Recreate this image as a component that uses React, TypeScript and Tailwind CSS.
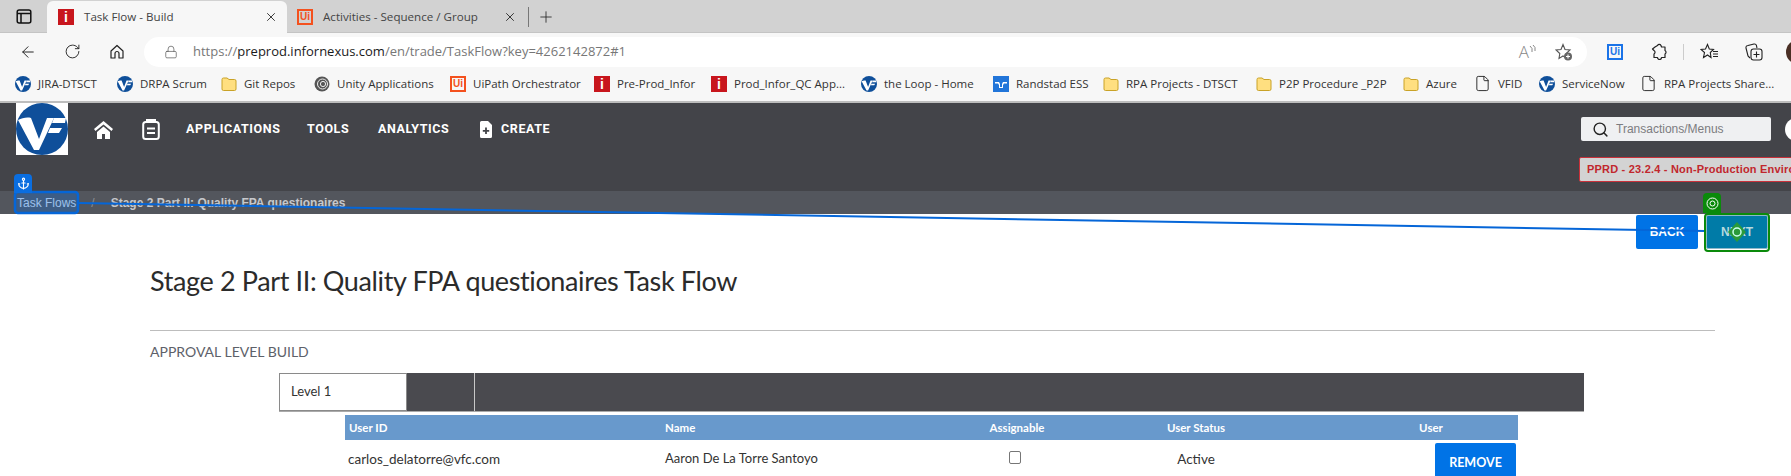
import { Anchor, ArrowLeft, File as FileIcon, Lock, Plus, RotateCw, Search, X } from "lucide-react";

const VF = ({ size = 16, square = false }: { size?: number; square?: boolean }) => (
  <svg width={size} height={size} viewBox="0 0 52 52" className="shrink-0 block">
    {square && <rect width="52" height="52" fill="#fff" />}
    <circle cx="26" cy="26" r="26" fill="#0f4f9a" />
    <path d="M2 17 C6 15 11 14 15 15 L23 36 L31 15 L38 15 L23 47 L18 47 Z" fill="#fff" />
    <path d="M38 15 L50 15 L49 20 L36 20 Z M34 25 L46 25 L43 30 L32 30 Z" fill="#fff" />
  </svg>
);

const Infor = () => (
  <span className="w-4 h-4 shrink-0 bg-[#c8161d] flex items-center justify-center text-white text-[14px] font-bold leading-none font-['Liberation_Sans',sans-serif]">
    i
  </span>
);

const UiP = () => (
  <span className="w-4 h-4 shrink-0 border-2 border-[#f4511e] flex items-center justify-center text-[#f4511e] text-[10px] font-bold leading-none font-['Liberation_Sans',sans-serif]">
    Ui
  </span>
);

const Folder = () => (
  <svg width="16" height="16" viewBox="0 0 16 16" className="shrink-0">
    <path d="M1 3.5 A1.5 1.5 0 0 1 2.5 2 H6 L8 3.5 H13.5 A1.5 1.5 0 0 1 15 5 V13 A1.5 1.5 0 0 1 13.5 14.5 H2.5 A1.5 1.5 0 0 1 1 13 Z" fill="#ffdf80" stroke="#c9a227" strokeWidth="1" />
  </svg>
);

const Unity = () => (
  <svg width="16" height="16" viewBox="0 0 16 16" className="shrink-0" fill="none">
    <circle cx="8" cy="8" r="7.5" fill="#555" />
    <circle cx="8.5" cy="8" r="5" stroke="#eee" strokeWidth="1" />
    <circle cx="9" cy="8" r="2.6" stroke="#eee" strokeWidth="1" />
  </svg>
);

const Randstad = () => (
  <svg width="16" height="16" viewBox="0 0 16 16" className="shrink-0">
    <rect width="16" height="16" fill="#2175d9" />
    <path d="M2 6 H6 L7 8 V11 H9 V8 L10 6 H14 V7.5 H11 L10 9 V12 H6 V9 L5 7.5 H2 Z" fill="#fff" />
  </svg>
);

const Doc = () => <FileIcon size={17} strokeWidth={1.3} className="shrink-0 text-[#222]" />;

const bookmarks = [
  { icon: <VF />, text: "JIRA-DTSCT", w: "w-[62px]" },
  { icon: <VF />, text: "DRPA Scrum", w: "w-[64px]" },
  { icon: <Folder />, text: "Git Repos", w: "w-[53px]" },
  { icon: <Unity />, text: "Unity Applications", w: "w-[96px]" },
  { icon: <UiP />, text: "UiPath Orchestrator", w: "w-[104px]" },
  { icon: <Infor />, text: "Pre-Prod_Infor", w: "w-[77px]" },
  { icon: <Infor />, text: "Prod_Infor_QC App...", w: "w-[110px]" },
  { icon: <VF />, text: "the Loop - Home", w: "w-[92px]" },
  { icon: <Randstad />, text: "Randstad ESS", w: "w-[70px]" },
  { icon: <Folder />, text: "RPA Projects - DTSCT", w: "w-[113px]" },
  { icon: <Folder />, text: "P2P Procedure _P2P", w: "w-[107px]" },
  { icon: <Folder />, text: "Azure", w: "w-[31px]" },
  { icon: <Doc />, text: "VFID", w: "w-[24px]" },
  { icon: <VF />, text: "ServiceNow", w: "w-[61px]" },
  { icon: <Doc />, text: "RPA Projects Share...", w: "w-[109px]" },
];

export default function App() {
  return (
    <div className="relative w-[1791px] h-[476px] overflow-hidden bg-white flex flex-col font-['Open_Sans',sans-serif]">
      {/* tab strip */}
      <div className="h-[33px] shrink-0 bg-[#d2d2d2] border-b border-[#c4c4c4] flex items-stretch pt-px">
        <div className="w-[47px] flex items-center justify-center">
          <svg width="16" height="15" viewBox="0 0 16 15" fill="none" stroke="#111" strokeWidth="1.5">
            <rect x="1.2" y="1" width="13.6" height="13" rx="2" />
            <path d="M1.2 4.5 H14.8 M5 4.5 V14" />
          </svg>
        </div>
        <div className="w-[240px] h-[32px] bg-[#f7f7f7] rounded-t-md flex items-center pl-[11px] pr-[9px] text-[11.6px] text-[#444]">
          <Infor />
          <span className="ml-[10px] flex-1">Task Flow - Build</span>
          <X size={14} strokeWidth={1.5} className="text-[#222]" />
        </div>
        <div className="w-[233px] flex items-center pl-[10px] pr-[3px] text-[11.6px] text-[#444]">
          <UiP />
          <span className="ml-[10px] flex-1">Activities - Sequence / Group</span>
          <X size={14} strokeWidth={1.5} className="text-[#222]" />
        </div>
        <div className="w-px h-[20px] mt-[6px] ml-[8px] bg-[#777]" />
        <div className="flex items-center ml-[8px]">
          <Plus size={18} strokeWidth={1.1} className="text-[#222]" />
        </div>
      </div>

      {/* toolbar */}
      <div className="h-[37px] shrink-0 bg-[#f7f7f7] flex items-center relative">
        <div className="w-[144px] shrink-0 flex items-center pl-[19px] text-[#222]">
          <ArrowLeft size={18} strokeWidth={1.3} />
          <RotateCw size={17} strokeWidth={1.3} className="ml-[27px]" />
          <svg width="16" height="16" viewBox="0 0 16 16" fill="none" stroke="#222" strokeWidth="1.2" className="ml-[28px]">
            <path d="M2 7 L8 1.5 L14 7 V14 H10 V9.5 A2 2 0 0 0 6 9.5 V14 H2 Z" strokeLinejoin="round" />
          </svg>
        </div>
        <div className="w-[1443px] shrink-0 h-[30px] bg-white rounded-full flex items-center pl-[20px] pr-[14px] text-[13px]">
          <Lock size={14} strokeWidth={1.2} className="text-[#555]" />
          <span className="ml-[15px] text-[#777] whitespace-nowrap">
            https://<span className="text-[#1a1a1a]">preprod.infornexus.com</span>/en/trade/TaskFlow?key=4262142872#1
          </span>
          <div className="flex-1" />
          <span className="text-[17px] font-light text-[#888] leading-none">A</span>
          <svg width="8" height="12" viewBox="0 0 8 12" fill="none" stroke="#888" className="-mt-1"><path d="M1 2 Q4 4 3 8 M4 1 Q7 3 6 7" /></svg>
          <svg width="18" height="18" viewBox="0 0 18 18" className="ml-[18px]" fill="none" stroke="#555" strokeWidth="1.1">
            <path d="M8 1.5 L10 6.5 L15 7 L11.2 10.5 L12 15.5 L8 13 L4 15.5 L4.8 10.5 L1 7 L6 6.5 Z" />
            <circle cx="13" cy="13.5" r="4" fill="#666" stroke="none" />
            <path d="M13 11.5 V15.5 M11 13.5 H15" stroke="#fff" />
          </svg>
        </div>
        <span className="ml-[20px] w-4 h-4 shrink-0 border-2 border-[#1a73e8] flex items-center justify-center text-[#1a73e8] text-[10px] font-bold leading-none font-['Liberation_Sans',sans-serif]">
          Ui
        </span>
        <svg width="17" height="17" viewBox="0 0 17 17" fill="none" stroke="#222" strokeWidth="1.2" className="ml-[28px] shrink-0">
          <path d="M6.5 2.5 A2 2 0 0 1 10 2.5 L10.5 4 H14 V7.5 A2 2 0 0 1 14 11 V14.5 H10.5 A2 2 0 0 1 6.5 14.5 H3 V11 A2 2 0 0 0 3 7.5 L1.5 6 L4 4 Z" strokeLinejoin="round" />
        </svg>
        <div className="ml-[15px] w-px h-[16px] shrink-0 bg-[#ccc]" />
        <svg width="19" height="17" viewBox="0 0 19 17" fill="none" stroke="#222" strokeWidth="1.1" className="ml-[16px] shrink-0">
          <path d="M7.5 1.5 L9.3 6 L13.5 6.5 L10.3 9.5 L11 14.5 L7.5 12 L3.5 14.5 L4.5 9.5 L1 6.5 L5.5 6 Z" />
          <path d="M13 8.5 H18 M13 11 H18 M13 13.5 H18" />
        </svg>
        <svg width="18" height="18" viewBox="0 0 18 18" fill="none" stroke="#222" strokeWidth="1.1" className="ml-[26px] shrink-0">
          <path d="M5 15 L3 13 L1 5 A2 2 0 0 1 3 2.5 L9 1 A2 2 0 0 1 11.5 3 L12 5" />
          <rect x="6" y="6" width="11" height="11" rx="2.5" />
          <path d="M11.5 8.5 V14.5 M8.5 11.5 H14.5" />
        </svg>
        <div className="ml-[23px] w-[24px] h-[24px] shrink-0 rounded-full bg-[#4a2f25]" />
      </div>

      {/* bookmarks */}
      <div className="h-[33px] shrink-0 bg-[#f7f7f7] border-b-2 border-[#bdbdbd] flex items-center pb-[4px] pl-[15px] gap-[17px] text-[11.5px] text-[#333]">
        {bookmarks.map((b) => (
          <div key={b.text} className="flex items-center gap-[7px] shrink-0">
            {b.icon}
            <span className={`${b.w} whitespace-nowrap`}>{b.text}</span>
          </div>
        ))}
      </div>

      {/* app header */}
      <div className="h-[88px] shrink-0 bg-[#434449] flex justify-between items-start pl-[16px] overflow-hidden">
        <div className="flex items-center h-[52px]">
          <VF size={52} square />
          <svg width="19" height="18" viewBox="0 0 19 18" fill="#fff" className="ml-[26px] mt-[1px]">
            <path d="M9.5 0 L19 8 L17.5 10 L9.5 3.5 L1.5 10 L0 8 Z" />
            <path d="M9.5 5.5 L16 11 V18 H11 V13 H8 V18 H3 V11 Z" />
          </svg>
          <svg width="18" height="21" viewBox="0 0 18 21" fill="none" stroke="#fff" strokeWidth="2" className="ml-[29px] mt-[1px]">
            <rect x="1.2" y="3" width="15.6" height="17" rx="2.5" />
            <path d="M5 1 H13 V3 H5 Z" fill="#fff" />
            <path d="M5 9.5 H13 M5 14 H13" />
          </svg>
          <nav className="flex items-center text-white text-[12.5px] font-bold tracking-[0.6px] font-['Roboto',sans-serif]">
            <span className="ml-[26px] w-[94px] whitespace-nowrap">APPLICATIONS</span>
            <span className="ml-[27px] w-[44px]">TOOLS</span>
            <span className="ml-[27px] w-[72px]">ANALYTICS</span>
            <svg width="12" height="17" viewBox="0 0 12 17" className="ml-[30px]">
              <path d="M1.5 0 H8 L12 4 V15.5 A1.5 1.5 0 0 1 10.5 17 H1.5 A1.5 1.5 0 0 1 0 15.5 V1.5 A1.5 1.5 0 0 1 1.5 0 Z" fill="#fff" />
              <path d="M6 6.5 V13 M2.8 9.8 H9.2" stroke="#434449" strokeWidth="1.8" />
            </svg>
            <span className="ml-[9px]">CREATE</span>
          </nav>
        </div>
        <div className="w-[212px] shrink-0 pt-[14px]">
          <div className="flex items-center">
            <div className="ml-[2px] w-[190px] h-[24px] shrink-0 bg-[#eff0f2] rounded-[2px] flex items-center pl-[11px] text-[12px] text-[#7c7c80] font-['Liberation_Sans',sans-serif]">
              <Search size={17} strokeWidth={2} className="text-[#222] mr-[7px]" />
              Transactions/Menus
            </div>
            <div className="ml-[14px] w-[23px] h-[23px] shrink-0 rounded-full bg-white" />
          </div>
          <div className="mt-[16px] w-[300px] h-[25px] bg-[#d3d3d3] border border-[#c8313a] rounded-[2px] flex items-center pl-[7px] text-[11px] font-bold text-[#c1272d] tracking-[0.2px] whitespace-nowrap font-['Liberation_Sans',sans-serif]">
            PPRD - 23.2.4 - Non-Production Environment
          </div>
        </div>
      </div>

      {/* breadcrumb */}
      <div className="h-[23px] shrink-0 bg-[#53565d] flex items-center pl-[17px] text-[12px] font-['Liberation_Sans',sans-serif]">
        <span className="text-[#dbe4f2]">Task Flows</span>
        <span className="ml-[15px] text-[#8d9096]">/</span>
        <span className="ml-[16px] font-bold text-[#c6c8cc]">Stage 2 Part II: Quality FPA questionaires</span>
      </div>

      {/* actions */}
      <div className="flex justify-end gap-[8px] pr-[23px] pt-px h-[38px] shrink-0">
        <button className="w-[62px] h-[34px] bg-[#0073e6] rounded-[2px] text-white text-[12px] font-bold font-['Liberation_Sans',sans-serif]">BACK</button>
        <button className="w-[62px] h-[34px] bg-[#007ba7] border border-[#8fb8c8] rounded-[2px] text-[#b7dadd] text-[12px] font-bold font-['Liberation_Sans',sans-serif]">NEXT</button>
      </div>

      {/* body */}
      <div className="pl-[150px] pr-[76px] font-['Lato',sans-serif]">
        <h1 className="mt-[9px] h-[40px] leading-[40px] text-[27px] tracking-[-0.37px] text-[#2b2b2b] whitespace-nowrap">
          Stage 2 Part II: Quality FPA questionaires Task Flow
        </h1>
        <div className="mt-[29px] h-px bg-[#bdbdbd]" />
        <div className="mt-[11px] h-[20px] leading-[20px] text-[14px] text-[#5d6169]">APPROVAL LEVEL BUILD</div>
      </div>

      <div className="mt-[11px] ml-[279px] w-[1305px] shrink-0">
        <div className="h-[39px] bg-[#4a4a4f] border-b border-[#aaa] flex">
          <div className="w-[128px] bg-white border border-[#8a8a8a] flex items-center pl-[11px] text-[13px] text-[#333] font-['Lato',sans-serif]">Level 1</div>
          <div className="w-[68px] border-r border-[#c8c8c8]" />
        </div>
      </div>

      <div className="mt-[3px] ml-[345px] w-[1173px] shrink-0 font-['Lato',sans-serif]">
        <div className="h-[25px] bg-[#6899cc] grid grid-cols-[320px_270px_164px_194px_1fr] items-center text-white text-[11.5px] font-bold">
          <span className="pl-[4px]">User ID</span>
          <span>Name</span>
          <span className="text-center">Assignable</span>
          <span className="text-center">User Status</span>
          <span className="text-center pl-[51px]">User</span>
        </div>
        <div className="h-[40px] mt-[3px] grid grid-cols-[320px_270px_164px_194px_1fr] items-start text-[13.5px] text-[#333]">
          <span className="pl-[3px] mt-[6px]">carlos_delatorre@vfc.com</span>
          <span className="mt-[6px] text-[13px]">Aaron De La Torre Santoyo</span>
          <div className="mt-[8px] pr-[4px] flex justify-center">
            <div className="w-[12px] h-[13px] rounded-[2px] border border-[#767676] bg-white" />
          </div>
          <span className="text-center mt-[6px]">Active</span>
          <button className="ml-[142px] w-[81px] h-[40px] bg-[#0073e6] rounded-[2px] text-white text-[12.5px] font-bold">REMOVE</button>
        </div>
      </div>

      {/* Automation overlay */}
      <svg className="absolute inset-0 pointer-events-none" width="1791" height="476">
        <rect x="15" y="192" width="63" height="21" rx="3" fill="#0a6ee0" fillOpacity="0.3" stroke="#0566d8" strokeWidth="2.5" />
        <path d="M78 203 L1705 231" stroke="#0566d8" strokeWidth="2" fill="none" />
        <rect x="1705" y="214" width="64" height="37" rx="3" fill="none" stroke="#0a8a0a" strokeWidth="2" />
        <path d="M1737 222 L1746 232 L1737 242 L1728 232 Z" fill="#2a9a3a" />
        <circle cx="1737" cy="232" r="4" fill="none" stroke="#cfe" strokeWidth="1.5" />
      </svg>
      <div className="absolute left-[14px] top-[174px] w-[18px] h-[19px] bg-[#0a6ee0] rounded-t-[4px] flex items-center justify-center">
        <Anchor size={13} strokeWidth={2} className="text-white" />
      </div>
      <div className="absolute left-[1703px] top-[193px] w-[18px] h-[20px] bg-[#0a8a0a] rounded-t-[4px] flex items-center justify-center">
        <svg width="13" height="13" viewBox="0 0 13 13" fill="none" stroke="#fff">
          <circle cx="6.5" cy="6.5" r="5.5" />
          <circle cx="6.5" cy="6.5" r="2.5" />
        </svg>
      </div>
    </div>
  );
}
